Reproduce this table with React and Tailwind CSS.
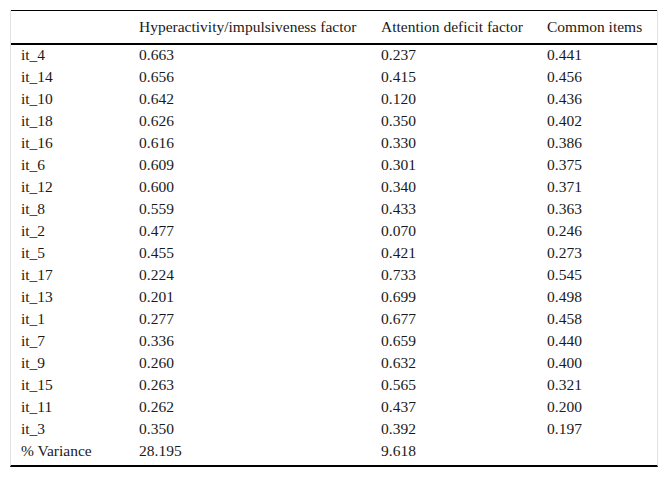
import React from "react";

const rows = [
  ["it_4", "0.663", "0.237", "0.441"],
  ["it_14", "0.656", "0.415", "0.456"],
  ["it_10", "0.642", "0.120", "0.436"],
  ["it_18", "0.626", "0.350", "0.402"],
  ["it_16", "0.616", "0.330", "0.386"],
  ["it_6", "0.609", "0.301", "0.375"],
  ["it_12", "0.600", "0.340", "0.371"],
  ["it_8", "0.559", "0.433", "0.363"],
  ["it_2", "0.477", "0.070", "0.246"],
  ["it_5", "0.455", "0.421", "0.273"],
  ["it_17", "0.224", "0.733", "0.545"],
  ["it_13", "0.201", "0.699", "0.498"],
  ["it_1", "0.277", "0.677", "0.458"],
  ["it_7", "0.336", "0.659", "0.440"],
  ["it_9", "0.260", "0.632", "0.400"],
  ["it_15", "0.263", "0.565", "0.321"],
  ["it_11", "0.262", "0.437", "0.200"],
  ["it_3", "0.350", "0.392", "0.197"],
  ["% Variance", "28.195", "9.618", ""],
];

const App = () => {
  return (
    <div className="bg-white w-[668px] h-[479px] pt-[10px] pl-[10px] [font-family:'Liberation_Serif',serif] text-[15.5px] leading-[18px] text-[#1a1a1a]">
      <div className="w-[648px] border-x border-[#e2e2e2] pb-[3px] border-b-2 border-b-black">
        <table className="w-full border-collapse">
          <thead>
            <tr className="border-t border-t-black border-b-2 border-b-black">
              <th className="h-[33px] w-[128px] pl-[10px] text-left font-normal"></th>
              <th className="w-[242px] text-left font-normal">Hyperactivity/impulsiveness factor</th>
              <th className="w-[166px] text-left font-normal">Attention deficit factor</th>
              <th className="text-left font-normal">Common items</th>
            </tr>
          </thead>
          <tbody>
            {rows.map((r, i) => (
              <tr key={i} className="h-[22px]">
                <td className="pl-[10px]">{r[0]}</td>
                <td>{r[1]}</td>
                <td>{r[2]}</td>
                <td>{r[3]}</td>
              </tr>
            ))}
          </tbody>
        </table>
      </div>
    </div>
  );
};

export default App;
